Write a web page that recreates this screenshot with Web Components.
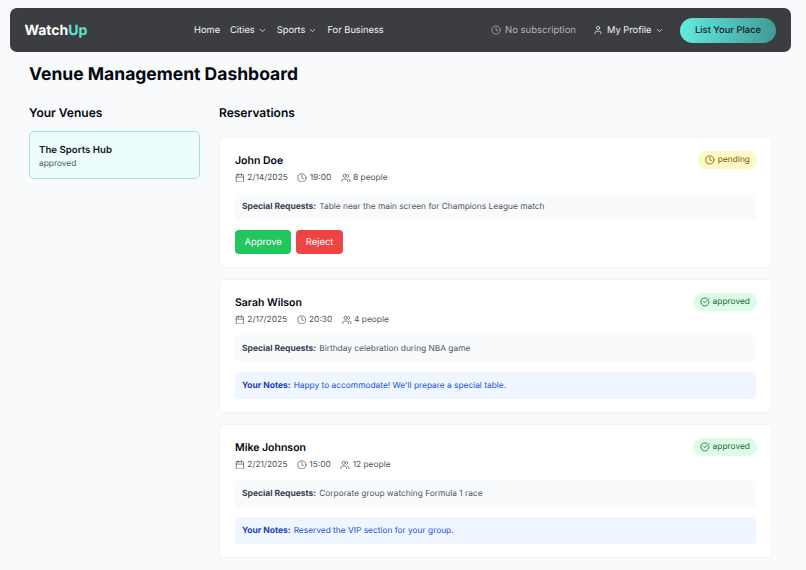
<!DOCTYPE html>
<html><head><meta charset="utf-8">
<style>
html,body{margin:0;padding:0;background:#f9fafb;height:570px;overflow:hidden}
body{font-family:Inter,"Liberation Sans",sans-serif;color:#030712;text-rendering:geometricPrecision}
</style></head><body>
<wu-app></wu-app>
<script>
const ICONS={
clock:'<circle cx="12" cy="12" r="10"/><path d="M12 6v6l4 2"/>',
calendar:'<rect x="3" y="4" width="18" height="18" rx="2"/><path d="M16 2v4M8 2v4M3 10h18"/>',
users:'<path d="M16 21v-2a4 4 0 0 0-4-4H6a4 4 0 0 0-4 4v2"/><circle cx="9" cy="7" r="4"/><path d="M22 21v-2a4 4 0 0 0-3-3.87M16 3.13a4 4 0 0 1 0 7.75"/>',
user:'<path d="M19 21v-2a4 4 0 0 0-4-4H9a4 4 0 0 0-4 4v2"/><circle cx="12" cy="7" r="4"/>',
check:'<path d="M21.8 10A10 10 0 1 1 17 3.34"/><path d="m9 11 3 3L22 4"/>',
chev:'<path d="m6 9 6 6 6-6"/>'
};
const svg=(n,s,w=2)=>`<svg width="${s}" height="${s}" viewBox="0 0 24 24" fill="none" stroke="currentColor" stroke-width="${w}" stroke-linecap="round" stroke-linejoin="round" style="flex:none;display:block">${ICONS[n]}</svg>`;
class Base extends HTMLElement{constructor(){super();this.attachShadow({mode:'open'})}}
class WuNav extends Base{connectedCallback(){this.shadowRoot.innerHTML=`<style>
:host{display:flex;align-items:center;height:44px;margin:8px 15px 0 10px;padding:0 15px 0 14.5px;background:#3c3d41;border-radius:7px;color:#f3f4f6;font-size:9.3px;font-weight:400;box-sizing:border-box}
.logo{font-size:14px;font-weight:700;color:#fff;width:169.5px}
.logo span{color:#5ce5d8}
.links{display:flex;align-items:center;gap:10px}
.i{display:flex;align-items:center;gap:3px;white-space:nowrap}
.right{margin-left:auto;display:flex;align-items:center}
.sub{display:flex;align-items:center;gap:4px;color:#b4b6ba;font-size:9.5px;margin-right:17px}
.pro{display:flex;align-items:center;gap:3px;margin-right:16.5px}
.pro svg:first-child{margin-right:1px}
.btn{display:flex;align-items:center;justify-content:center;width:96px;height:25px;border-radius:12.5px;background:linear-gradient(90deg,#62ebe0,#419a95);color:#111827;font-size:9.4px;font-weight:500}
</style>
<div class="logo">Watch<span>Up</span></div>
<div class="links"><div class="i">Home</div><div class="i">Cities ${svg('chev',9)}</div><div class="i">Sports ${svg('chev',9)}</div><div class="i">For Business</div></div>
<div class="right"><div class="sub">${svg('clock',10,1.8)}No subscription</div><div class="pro">${svg('user',10,1.8)}My Profile ${svg('chev',9)}</div><div class="btn">List Your Place</div></div>`}}
class WuVenue extends Base{connectedCallback(){this.shadowRoot.innerHTML=`<style>
:host{display:block;box-sizing:border-box;height:48px;border:1px solid #a5e0dc;border-radius:5px;background:#ecfdfb;padding:12px 9px 0}
.n{font-size:9.7px;font-weight:600;line-height:13px;color:#111827}.s{font-size:8.4px;line-height:14px;color:#4b5563}
</style><div class="n"><slot name="name"></slot></div><div class="s"><slot name="status"></slot></div>`}}
class WuBadge extends Base{connectedCallback(){const k=this.getAttribute('kind');const a=k==='approved';this.shadowRoot.innerHTML=`<style>
:host{display:flex;align-items:center;gap:3px;height:18px;padding:0 7px;border-radius:9px;font-size:8.4px;font-weight:400;background:${a?'#dcfce7':'#fef9c3'};color:${a?'#166534':'#854d0e'}}
</style>${svg(a?'check':'clock',9.8,2)}<slot></slot>`}}
class WuMeta extends Base{connectedCallback(){this.shadowRoot.innerHTML=`<style>
:host{display:flex;align-items:center;gap:2.5px;font-size:8.4px;color:#4b5563;white-space:nowrap}
svg{margin-bottom:2px}
</style>${svg(this.getAttribute('icon'),9.8,1.8)}<slot></slot>`}}
class WuNote extends Base{connectedCallback(){const b=this.getAttribute('kind')==='blue';this.shadowRoot.innerHTML=`<style>
:host{display:flex;align-items:center;box-sizing:border-box;height:27px;padding:0 7px;border-radius:4px;font-size:8.35px;background:${b?'#eff6ff':'#f9fafb'};color:${b?'#1d4ed8':'#4b5563'}}
b{font-weight:700;font-size:8.5px;color:${b?'#1e40af':'#374151'};margin-right:.35em}
</style><span><b>${this.getAttribute('label')}:</b><slot></slot></span>`}}
class WuBtn extends Base{connectedCallback(){this.shadowRoot.innerHTML=`<style>
:host{display:flex;align-items:center;justify-content:center;height:24px;padding:0 9.5px;border-radius:4px;font-size:9.4px;font-weight:400;color:#fff;background:${this.getAttribute('color')}}
</style><slot></slot>`}}
class WuRes extends Base{connectedCallback(){this.shadowRoot.innerHTML=`<style>
:host{display:flex;flex-direction:column;box-sizing:border-box;padding:15px 15px 13px;background:#fff;border:1px solid #f3f4f6;border-radius:5px}
.top{display:flex;justify-content:space-between;align-items:flex-start}
.n{font-size:10.5px;font-weight:600;line-height:16px;margin-bottom:3px;color:#030712}
.meta{display:flex;gap:9.5px;line-height:13px}
.body{display:flex;flex-direction:column;gap:10px;margin-top:8px}
::slotted(wu-badge){margin:-2px -1px 0 0}
</style><div class="top"><div><div class="n"><slot name="name"></slot></div><div class="meta"><slot name="meta"></slot></div></div><slot name="badge"></slot></div>
<div class="body"><slot></slot></div>`}}
class WuApp extends Base{connectedCallback(){
const res=(n,d,t,p,st,req,extra)=>`<wu-res><span slot="name">${n}</span>
<wu-meta slot="meta" icon="calendar">${d}</wu-meta><wu-meta slot="meta" icon="clock">${t}</wu-meta><wu-meta slot="meta" icon="users">${p}</wu-meta>
<wu-badge slot="badge" kind="${st}">${st}</wu-badge>
<wu-note label="Special Requests">${req}</wu-note>${extra}</wu-res>`;
this.shadowRoot.innerHTML=`<style>
:host{display:block;width:806px;height:570px;overflow:hidden}
h1{margin:12px 0 0 29px;font-size:17.5px;line-height:22px;font-weight:700;color:#030712}
.cols{display:grid;grid-template-columns:171px 553px;gap:19px;margin:19px 0 0 29px}
h2{margin:0 0 10px;font-size:12px;line-height:16px;font-weight:600;color:#030712}
.r h2{margin-bottom:16px}
.list{display:flex;flex-direction:column;gap:11px}
.acts{display:flex;gap:5px}
</style>
<wu-nav></wu-nav>
<h1>Venue Management Dashboard</h1>
<div class="cols">
<section><h2>Your Venues</h2><wu-venue><span slot="name">The Sports Hub</span><span slot="status">approved</span></wu-venue></section>
<section class="r"><h2>Reservations</h2><div class="list">
${res('John Doe','2/14/2025','19:00','8 people','pending','Table near the main screen for Champions League match','<div class="acts"><wu-btn color="#22c55e">Approve</wu-btn><wu-btn color="#ef4444">Reject</wu-btn></div>')}
${res('Sarah Wilson','2/17/2025','20:30','4 people','approved','Birthday celebration during NBA game','<wu-note kind="blue" label="Your Notes">Happy to accommodate! We\'ll prepare a special table.</wu-note>')}
${res('Mike Johnson','2/21/2025','15:00','12 people','approved','Corporate group watching Formula 1 race','<wu-note kind="blue" label="Your Notes">Reserved the VIP section for your group.</wu-note>')}
</div></section></div>`}}
customElements.define('wu-nav',WuNav);customElements.define('wu-venue',WuVenue);customElements.define('wu-badge',WuBadge);customElements.define('wu-meta',WuMeta);customElements.define('wu-note',WuNote);customElements.define('wu-btn',WuBtn);customElements.define('wu-res',WuRes);customElements.define('wu-app',WuApp);
</script></body></html>
